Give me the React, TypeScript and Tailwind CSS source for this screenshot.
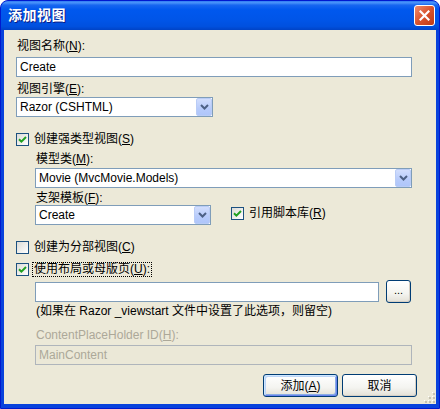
import type { ReactNode } from 'react'

const font = "font-['Liberation_Sans','Noto_Sans_CJK_SC',sans-serif]"

function Label({ children, disabled }: { children: ReactNode; disabled?: boolean }) {
  return (
    <div className={`h-[14px] leading-[14px] pl-[1px] whitespace-nowrap ${disabled ? 'text-[#ACA899]' : 'text-black'}`}>
      {children}
    </div>
  )
}

function TextBox({ value, width, disabled }: { value?: string; width: string; disabled?: boolean }) {
  return (
    <div
      className={`h-[20px] border flex items-center px-[3px] leading-none ${width} ${
        disabled ? 'bg-[#EBE8D7] border-[#AFB5BB] text-[#ACA899]' : 'bg-white border-[#7F9DB9] text-black'
      }`}
    >
      {value}
    </div>
  )
}

function Select({ value, width }: { value: string; width: string }) {
  return (
    <div className={`h-[20px] border border-[#7F9DB9] bg-white flex items-center ${width}`}>
      <span className="flex-1 pl-[3px] leading-none whitespace-nowrap">{value}</span>
      <div className="w-[16px] h-[18px] mr-0 rounded-[2px] border border-[#B9CCF6] bg-[linear-gradient(to_bottom,#D2DEFD,#B7CBFB_60%,#AFC6FA)] flex items-center justify-center">
        <svg width="9" height="6" viewBox="0 0 9 6">
          <path d="M1 1l3.5 3.5L8 1" fill="none" stroke="#4D6185" strokeWidth="2" />
        </svg>
      </div>
    </div>
  )
}

function CheckBox({ checked }: { checked: boolean }) {
  return (
    <div className="w-[13px] h-[13px] border border-[#1C5180] bg-[linear-gradient(135deg,#DCDCD7,#FFFFFF)] flex items-center justify-center shrink-0">
      {checked && (
        <svg width="9" height="9" viewBox="0 0 9 9">
          <path d="M1 4.2l2.4 2.4L8 2" fill="none" stroke="#21A121" strokeWidth="2" />
        </svg>
      )}
    </div>
  )
}

function CheckRow({ checked, children, focus }: { checked: boolean; children: ReactNode; focus?: boolean }) {
  return (
    <div className="h-[14px] flex items-center gap-[4px]">
      <CheckBox checked={checked} />
      <span className={`leading-[13px] whitespace-nowrap px-[1px] ${focus ? 'outline outline-1 outline-dotted outline-black' : ''}`}>
        {children}
      </span>
    </div>
  )
}

function Button({ children, primary, width }: { children: ReactNode; primary?: boolean; width: string }) {
  return (
    <div
      className={`h-[23px] ${width} rounded-[3px] border border-[#003C74] bg-[linear-gradient(to_bottom,#FFFFFF,#F4F4F0_60%,#E3E0D6)] flex items-center justify-center leading-none ${
        primary
          ? 'shadow-[inset_1px_1px_0_#CEE7FF,inset_-1px_-1px_0_#6982EE,inset_2px_2px_0_#BCD4F6,inset_-2px_-2px_0_#89ADE4]'
          : 'shadow-[inset_-1px_-1px_0_#D6D0C5]'
      }`}
    >
      {children}
    </div>
  )
}

export default function App() {
  return (
    <div className={`w-[440px] h-[409px] bg-white ${font} text-[12px]`}>
      <div className="w-full h-full flex flex-col rounded-t-[8px] border border-[#0019CF] bg-[#0842DC] overflow-hidden">
        {/* Title bar */}
        <div className="h-[29px] shrink-0 flex items-center justify-between pl-[7px] pr-[4px] bg-[linear-gradient(to_bottom,#2F7BF5_0%,#4A94FA_6%,#1766F0_14%,#0058EE_30%,#0055E8_65%,#0050DE_88%,#0043C6_100%)]">
          <span className="text-white font-bold text-[14px] tracking-[0.5px] [text-shadow:1px_1px_0_#0A1C85]">添加视图</span>
          <div className="w-[21px] h-[21px] rounded-[3px] border border-white bg-[linear-gradient(135deg,#EE8C6E,#D9532D_50%,#BE3A14)] flex items-center justify-center">
            <svg width="11" height="11" viewBox="0 0 11 11">
              <path d="M1.5 1.5l8 8M9.5 1.5l-8 8" stroke="white" strokeWidth="2.2" strokeLinecap="square" />
            </svg>
          </div>
        </div>

        {/* Body */}
        <div className="flex-1 mx-[3px] mb-[4px] bg-[#ECE9D8] px-[12px] flex flex-col relative">
          <div className="mt-[9px]">
            <Label>
              视图名称(<u>N</u>):
            </Label>
          </div>
          <div className="mt-[4px]">
            <TextBox value="Create" width="w-[396px]" />
          </div>
          <div className="mt-[5px]">
            <Label>
              视图引擎(<u>E</u>):
            </Label>
          </div>
          <div className="mt-[1px]">
            <Select value="Razor (CSHTML)" width="w-[197px]" />
          </div>

          <div className="mt-[15px]">
            <CheckRow checked>
              创建强类型视图(<u>S</u>)
            </CheckRow>
          </div>

          <div className="ml-[19px] flex flex-col">
            <div className="mt-[6px]">
              <Label>
                模型类(<u>M</u>):
              </Label>
            </div>
            <div className="mt-[2px]">
              <Select value="Movie (MvcMovie.Models)" width="w-[377px]" />
            </div>
            <div className="mt-[3px]">
              <Label>
                支架模板(<u>F</u>):
              </Label>
            </div>
            <div className="flex items-center">
              <Select value="Create" width="w-[176px]" />
              <div className="ml-[20px] -mt-[3px]">
                <CheckRow checked>
                  引用脚本库(<u>R</u>)
                </CheckRow>
              </div>
            </div>
          </div>

          <div className="mt-[15px]">
            <CheckRow checked={false}>
              创建为分部视图(<u>C</u>)
            </CheckRow>
          </div>
          <div className="mt-[8px]">
            <CheckRow checked focus>
              使用布局或母版页(<u>U</u>):
            </CheckRow>
          </div>

          <div className="ml-[19px] flex flex-col">
            <div className="mt-[4px] flex items-center gap-[7px]">
              <TextBox width="w-[344px]" />
              <Button width="w-[25px]">
                <span className="text-[11px] -mt-[3px]">...</span>
              </Button>
            </div>
            <div className="mt-[1px]">
              <Label>(如果在 Razor _viewstart 文件中设置了此选项，则留空)</Label>
            </div>
            <div className="mt-[10px]">
              <Label disabled>
                ContentPlaceHolder ID(<u>H</u>):
              </Label>
            </div>
            <div className="mt-[3px]">
              <TextBox value="MainContent" width="w-[377px]" disabled />
            </div>
          </div>

          <div className="mt-[9px] flex justify-end gap-[4px] mr-[7px]">
            <Button primary width="w-[75px]">
              添加(<u>A</u>)
            </Button>
            <Button width="w-[75px]">取消</Button>
          </div>

          {/* size grip */}
          <svg className="absolute right-[1px] bottom-[1px]" width="11" height="11" viewBox="0 0 11 11">
            {[
              [9, 1],
              [9, 5],
              [5, 5],
              [9, 9],
              [5, 9],
              [1, 9],
            ].map(([x, y], i) => (
              <g key={i}>
                <rect x={x} y={y} width="2" height="2" fill="#C5C2B2" />
                <rect x={x - 1} y={y - 1} width="1" height="1" fill="#FFFFFF" />
              </g>
            ))}
          </svg>
        </div>
      </div>
    </div>
  )
}
